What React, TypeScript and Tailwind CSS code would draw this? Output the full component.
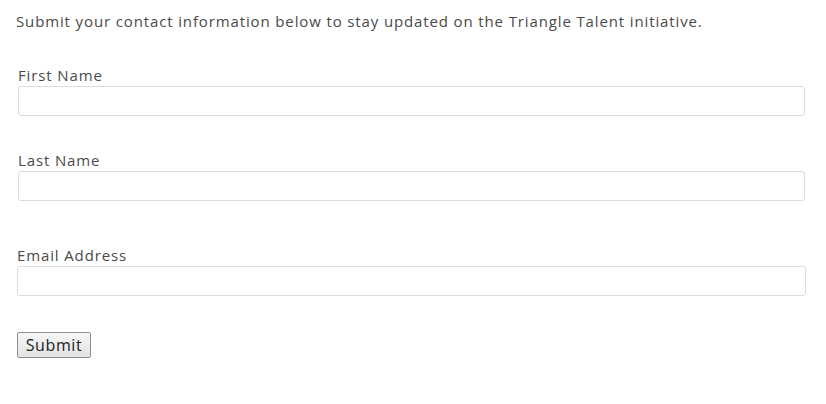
export default function App() {
  const font = { fontFamily: '"Open Sans", "Liberation Sans", sans-serif' };
  return (
    <div className="w-[826px] h-[404px] bg-white text-[#4a4a4a] pt-[10px]" style={font}>
      <p className="ml-[16px] text-[15px] leading-[22px] tracking-[0.87px]">
        Submit your contact information below to stay updated on the Triangle Talent initiative.
      </p>
      <form onSubmit={(e) => e.preventDefault()}>
        <label className="block ml-[18px] mt-[32px] text-[15px] leading-[22px] tracking-[0.87px]">First Name</label>
        <input className="block ml-[18px] w-[787px] h-[30px] border border-[#dcdcdc] rounded-[3px] bg-white" />
        <label className="block ml-[18px] mt-[33px] text-[15px] leading-[22px] tracking-[0.87px]">Last Name</label>
        <input className="block ml-[18px] w-[787px] h-[30px] border border-[#dcdcdc] rounded-[3px] bg-white" />
        <label className="block ml-[17px] mt-[43px] text-[15px] leading-[22px] tracking-[0.87px]">Email Address</label>
        <input className="block ml-[17px] w-[789px] h-[30px] border border-[#dcdcdc] rounded-[3px] bg-white" />
        <button
          type="submit"
          className="block ml-[17px] mt-[36px] w-[74px] h-[26px] border border-[#8f8f8f] rounded-[2px] bg-gradient-to-b from-[#f6f6f6] to-[#e3e3e3] text-[16px] leading-[24px] tracking-[0.6px] text-[#222]"
        >
          Submit
        </button>
      </form>
    </div>
  );
}
